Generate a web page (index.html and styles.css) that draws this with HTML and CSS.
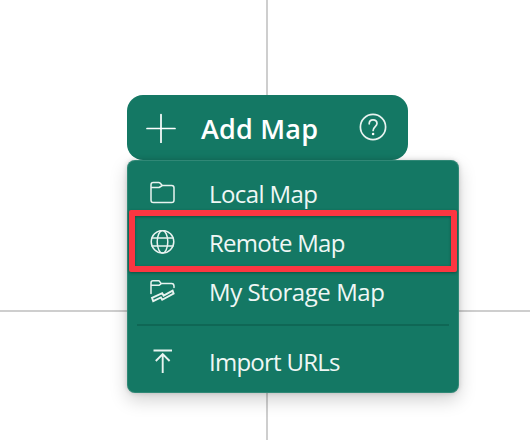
FILE: index.html
```html
<!DOCTYPE html>
<html lang="en">
<head>
<meta charset="utf-8">
<title>Add Map</title>
<link rel="stylesheet" href="styles.css">
</head>
<body>
<main class="canvas">
  <button class="add-button">
    <svg class="icon-plus" width="30" height="30" viewBox="0 0 30 30"><path d="M1 15.5H29M15 1.5V29.5"/></svg>
    <span class="add-label">Add Map</span>
    <svg class="icon-help" width="28" height="28" viewBox="0 0 28 28"><circle cx="14" cy="14" r="12.6"/><path d="M10.2 10.8C10.2 8.2 11.8 6.8 14 6.8S18 8.2 18 10.6C18 13.5 14.1 13.8 14.1 17.5"/><circle class="dot" cx="14.1" cy="21" r="1.3"/></svg>
  </button>
  <nav class="menu">
    <a class="item">
      <svg width="26" height="26" viewBox="0 0 26 26"><path d="M1 4V19.2Q1 21.5 3.3 21.5H21.7Q24 21.5 24 19.2V6.8Q24 4.5 21.7 4.5H12.3L10.3 2.2Q9.7 1.6 8.7 1.6H3.3Q1 1.6 1 3.8M1 6.5H9.1L12.3 4.5"/></svg>
      <span class="label local">Local Map</span>
    </a>
    <a class="item">
      <svg width="26" height="26" viewBox="0 0 26 26"><circle cx="12.5" cy="11.8" r="11.3"/><ellipse cx="12.5" cy="11.8" rx="5.3" ry="11.3"/><path d="M2 7.9H23M2 15.9H23"/></svg>
      <span class="label remote">Remote Map</span>
      <span class="highlight"></span>
    </a>
    <a class="item">
      <svg width="26" height="26" viewBox="0 0 26 26"><path d="M1 14.5V3.7Q1 1.7 3 1.7H9L11.3 4.6H21.5Q24 4.6 24 7.2V8.6M1 6.3H9L11.3 4.6"/><path class="bolt" d="M2 18.8L12.2 14.2L13.6 16.6L22.6 11.7L23.6 14.5L12.2 20.8L10.9 18.5L3.2 22.2Z"/></svg>
      <span class="label storage">My Storage Map</span>
    </a>
    <hr class="divider">
    <a class="item">
      <svg width="26" height="26" viewBox="0 0 26 26"><path class="arrow" d="M3.5 1.5H22M12.7 24V5.3M5.8 12L12.7 5L19.6 12"/></svg>
      <span class="label import">Import URLs</span>
    </a>
  </nav>
</main>
</body>
</html>
```

FILE: styles.css
```css
* { box-sizing: border-box; }
body { margin: 0; font-family: "Open Sans", "Noto Sans", sans-serif; color: #fff; }
.canvas {
  width: 530px;
  height: 440px;
  padding: 95px 0 0 127px;
  overflow: hidden;
  background:
    linear-gradient(#cecece, #cecece) 266px 0 / 2px 100% no-repeat,
    linear-gradient(#cecece, #cecece) 0 310px / 100% 2px no-repeat,
    #fff;
}
.add-button {
  display: flex;
  align-items: center;
  width: 281px;
  height: 65px;
  padding: 0 21px 0 19px;
  border: 0;
  border-radius: 16px;
  background: #147864;
  color: #fff;
  font-family: inherit;
}
svg { flex: none; fill: none; stroke: #e8f3f0; stroke-width: 1.5; stroke-linejoin: round; stroke-linecap: round; }
.icon-plus { stroke-width: 1.7; stroke: #fff; }
.icon-help { margin: 0 0 1px auto; stroke-width: 1.7; }
.icon-help .dot { fill: #fff; stroke: none; }
.add-label { margin-left: 25px; font-size: 27px; font-weight: 600; line-height: 36px; letter-spacing: .2px; white-space: nowrap; padding-top: 2px; }
.menu {
  width: 332px;
  height: 233px;
  padding: 9px 0 8px;
  border-radius: 8px;
  background: #147864;
  box-shadow: 0 7px 18px rgba(0, 0, 0, .18), 0 0 5px rgba(0, 0, 0, .16), inset 0 0 0 1px rgba(255, 255, 255, .12);
}
.item { position: relative; display: flex; align-items: center; height: 49px; padding-left: 23px; }
.label { margin-left: 33px; font-size: 24px; line-height: 34px; white-space: nowrap; color: #eff7f5; }
.local { letter-spacing: -.58px; }
.remote { letter-spacing: -.72px; }
.storage { letter-spacing: -.43px; }
.import { letter-spacing: -.75px; }
.bolt { fill: #147864; stroke-width: 1.9; stroke-linejoin: miter; }
.arrow { stroke-width: 1.9; stroke-linecap: butt; stroke-linejoin: miter; }
.divider { height: 2px; margin: 8px 10px 11px; border: 0; background: #0f6755; }
.highlight {
  position: absolute;
  left: 2px;
  top: -8px;
  width: 328px;
  height: 62px;
  border: 6px solid #fc3641;
  border-radius: 2px;
  box-shadow: 0 1px 3px rgba(0, 0, 0, .35), inset 0 1px 3px rgba(0, 0, 0, .35);
}
```
